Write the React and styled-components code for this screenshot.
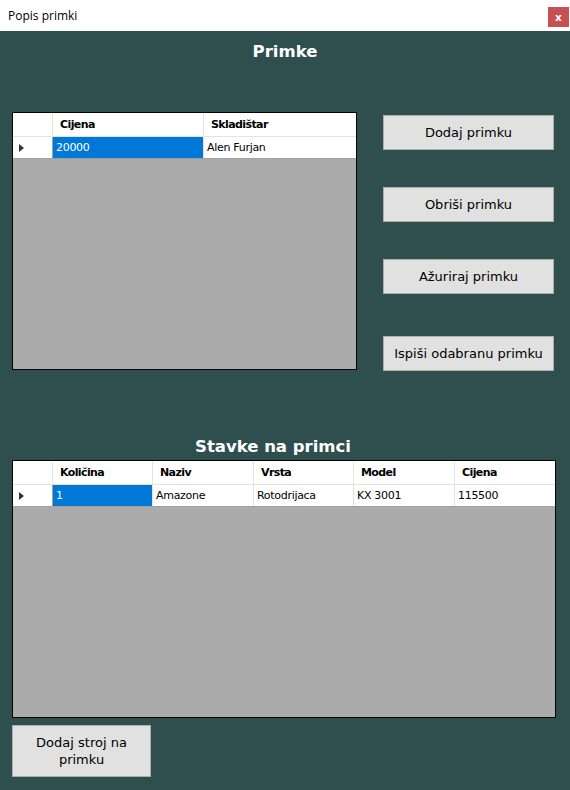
import React from "react";
import styled, { createGlobalStyle } from "styled-components";

const Global = createGlobalStyle`
  html, body { margin: 0; padding: 0; }
  body { width: 570px; height: 790px; overflow: hidden; background: #2f4f4f; }
`;

const Window = styled.div`
  width: 570px;
  height: 790px;
  background: #2f4f4f;
  display: flex;
  flex-direction: column;
  font-family: "DejaVu Sans", sans-serif;
`;

const TitleBar = styled.div`
  height: 31px;
  background: #ffffff;
  display: flex;
  align-items: center;
  justify-content: space-between;
  padding-left: 8px;
  padding-right: 1px;
  font-family: "Open Sans", sans-serif;
  font-size: 12px;
  color: #000;
`;

const CloseBtn = styled.div`
  width: 21px;
  height: 20px;
  margin-top: 2px;
  background: #c75050;
  color: #fff;
  font-size: 11px;
  font-weight: bold;
  display: flex;
  align-items: center;
  justify-content: center;
`;

const Body = styled.div`
  padding: 8px 15px 0 12px;
  display: flex;
  flex-direction: column;
`;

const Heading = styled.h1`
  margin: 0;
  color: #fff;
  font-size: 16.5px;
  font-weight: bold;
  text-align: center;
  padding-left: ${(p) => p.$left || 0}px;
  padding-right: ${(p) => p.$right || 0}px;
  line-height: 26px;
`;

const TopSection = styled.div`
  display: flex;
  margin-top: 47px;
  gap: 26px;
`;

const Grid = styled.div`
  width: ${(p) => p.$w}px;
  height: ${(p) => p.$h}px;
  border: 1px solid #000;
  background: #ababab;
  box-sizing: border-box;
  display: flex;
  flex-direction: column;
  font-size: 11px;
`;

const Row = styled.div`
  display: flex;
  height: ${(p) => p.$h}px;
  background: #fff;
  border-bottom: 1px solid ${(p) => (p.$header ? "#e3e3e3" : "#a0a0a0")};
`;

const RowHeader = styled.div`
  width: 40px;
  flex: none;
  border-right: 1px solid ${(p) => (p.$header ? "#e3e3e3" : "#a0a0a0")};
  display: flex;
  align-items: center;
  padding-left: 6px;
  box-sizing: border-box;
`;

const Cell = styled.div`
  width: ${(p) => p.$w}px;
  flex: none;
  box-sizing: border-box;
  border-right: 1px solid #e3e3e3;
  display: flex;
  align-items: center;
  padding-left: ${(p) => (p.$header ? 7 : 3)}px;
  font-weight: ${(p) => (p.$header ? "bold" : "normal")};
  background: ${(p) => (p.$selected ? "#0078d7" : "#fff")};
  color: ${(p) => (p.$selected ? "#fff" : "#000")};
  letter-spacing: ${(p) => (p.$header ? "-0.6px" : "-0.3px")};
  &:last-child { border-right: none; }
`;

const Arrow = styled.span`
  width: 0;
  height: 0;
  border-top: 4px solid transparent;
  border-bottom: 4px solid transparent;
  border-left: 5px solid #333;
`;

const ButtonCol = styled.div`
  display: flex;
  flex-direction: column;
  padding-top: 3px;
`;

const Button = styled.button`
  width: ${(p) => p.$w || 172}px;
  height: ${(p) => p.$h || 35}px;
  margin-top: ${(p) => p.$mt || 0}px;
  background: #e1e1e1;
  border: 1px solid #adadad;
  font-family: "DejaVu Sans", sans-serif;
  font-size: 13px;
  letter-spacing: 0;
  color: #000;
  padding: 0 10px;
  line-height: 17px;
`;

const SecondHeading = styled(Heading)`
  margin-top: 63px;
`;

const BottomRow = styled.div`
  margin-top: 7px;
`;

const DataGrid = ({ w, h, cols, row }) => (
  <Grid $w={w} $h={h}>
    <Row $h={23} $header>
      <RowHeader $header />
      {cols.map((c) => (
        <Cell key={c.t} $w={c.w} $header>
          {c.t}
        </Cell>
      ))}
    </Row>
    <Row $h={21}>
      <RowHeader>
        <Arrow />
      </RowHeader>
      {row.map((v, i) => (
        <Cell key={i} $w={cols[i].w} $selected={i === 0}>
          {v}
        </Cell>
      ))}
    </Row>
  </Grid>
);

export default function App() {
  return (
    <>
      <Global />
      <Window>
        <TitleBar>
          <span>Popis primki</span>
          <CloseBtn>x</CloseBtn>
        </TitleBar>
        <Body>
          <Heading $left={3}>Primke</Heading>
          <TopSection>
            <DataGrid
              w={345}
              h={258}
              cols={[
                { t: "Cijena", w: 151 },
                { t: "Skladištar", w: 152 },
              ]}
              row={["20000", "Alen Furjan"]}
            />
            <ButtonCol>
              <Button $w={171}>Dodaj primku</Button>
              <Button $w={171} $mt={37}>Obriši primku</Button>
              <Button $w={171} $mt={37}>Ažuriraj primku</Button>
              <Button $w={171} $mt={42}>Ispiši odabranu primku</Button>
            </ButtonCol>
          </TopSection>
          <SecondHeading $right={21}>Stavke na primci</SecondHeading>
          <DataGrid
            w={544}
            h={258}
            cols={[
              { t: "Količina", w: 100 },
              { t: "Naziv", w: 101 },
              { t: "Vrsta", w: 100 },
              { t: "Model", w: 101 },
              { t: "Cijena", w: 100 },
            ]}
            row={["1", "Amazone", "Rotodrijaca", "KX 3001", "115500"]}
          />
          <BottomRow>
            <Button $w={139} $h={52}>
              Dodaj stroj na primku
            </Button>
          </BottomRow>
        </Body>
      </Window>
    </>
  );
}
